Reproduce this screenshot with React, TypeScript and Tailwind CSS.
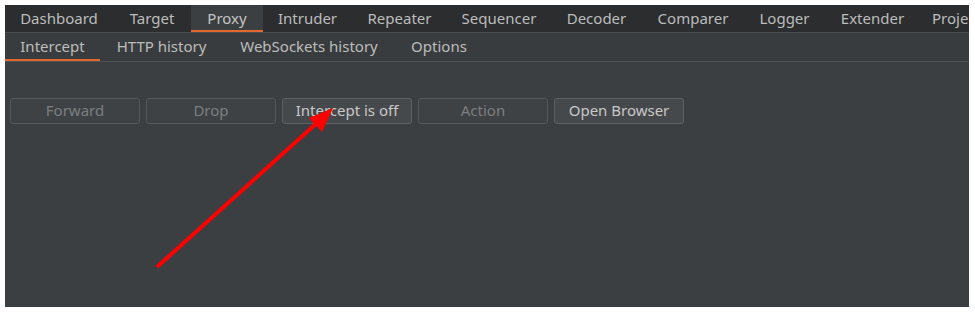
import React from 'react';

const topTabs = [
  { name: 'Dashboard', w: 'w-[108px]' },
  { name: 'Target', w: 'w-[78px]' },
  { name: 'Proxy', w: 'w-[72px]', active: true },
  { name: 'Intruder', w: 'w-[89px]' },
  { name: 'Repeater', w: 'w-[95px]' },
  { name: 'Sequencer', w: 'w-[104px]' },
  { name: 'Decoder', w: 'w-[91px]' },
  { name: 'Comparer', w: 'w-[102px]' },
  { name: 'Logger', w: 'w-[81px]' },
  { name: 'Extender', w: 'w-[95px]' },
  { name: 'Project options', w: 'w-[130px]' },
];

const subTabs = [
  { name: 'Intercept', w: 'w-[95px]', active: true },
  { name: 'HTTP history', w: 'w-[123px]' },
  { name: 'WebSockets history', w: 'w-[172px]' },
  { name: 'Options', w: 'w-[88px]' },
];

const buttons = [
  { label: 'Forward', disabled: true },
  { label: 'Drop', disabled: true },
  { label: 'Intercept is off' },
  { label: 'Action', disabled: true },
  { label: 'Open Browser' },
];

export default function App() {
  return (
    <div className="w-[975px] h-[313px] bg-white pt-[5px] pl-[5px] overflow-hidden" style={{ fontFamily: '"Noto Sans", "DejaVu Sans", sans-serif' }}>
      <div className="relative w-[964px] h-[302px] bg-[#3c3f41] overflow-hidden flex flex-col">
        {/* Top tabs */}
        <div className="flex h-[28px] bg-[#2b2d2f] border-b border-[#4a4d50] shrink-0">
          {topTabs.map(t => (
            <div
              key={t.name}
              className={`${t.w} shrink-0 flex items-center justify-center text-[15px] whitespace-nowrap relative ${t.active ? 'bg-[#3c3f41] text-[#c4c4c4]' : 'text-[#bcbcbc]'}`}
            >
              <span className="-mt-[1px]">{t.name}</span>
              {t.active && <div className="absolute left-0 right-0 bottom-0 h-[2px] bg-[#e2692e]" />}
            </div>
          ))}
        </div>

        {/* Sub tabs */}
        <div className="flex h-[29px] bg-[#393c3e] border-b border-[#505355] shrink-0">
          {subTabs.map(t => (
            <div
              key={t.name}
              className={`${t.w} shrink-0 flex items-center justify-center text-[15px] whitespace-nowrap relative text-[#bcbcbc]`}
            >
              <span className="-mt-[1px]">{t.name}</span>
              {t.active && <div className="absolute left-0 right-0 bottom-0 h-[2px] bg-[#e2692e]" />}
            </div>
          ))}
        </div>

        {/* Buttons */}
        <div className="flex gap-[6px] pl-[5px] pt-[36px]">
          {buttons.map(b => (
            <div
              key={b.label}
              className={`w-[130px] h-[26px] rounded-[3px] border flex items-center justify-center text-[15px] ${b.disabled ? 'border-[#56595b] bg-[#3f4244] text-[#7b7e80]' : 'border-[#5e6163] bg-[#46494b] text-[#c8c8c8]'}`}
            >
              <span className="-mt-[1px]">{b.label}</span>
            </div>
          ))}
        </div>

        {/* Annotation arrow */}
        <svg className="absolute left-0 top-0 pointer-events-none" width="964" height="302" viewBox="5 5 964 302">
          <line x1="157" y1="267" x2="318" y2="122" stroke="#ff0000" strokeWidth="4" />
          <polygon points="333,108 309,118 322,132" fill="#ff0000" />
        </svg>
      </div>
    </div>
  );
}
